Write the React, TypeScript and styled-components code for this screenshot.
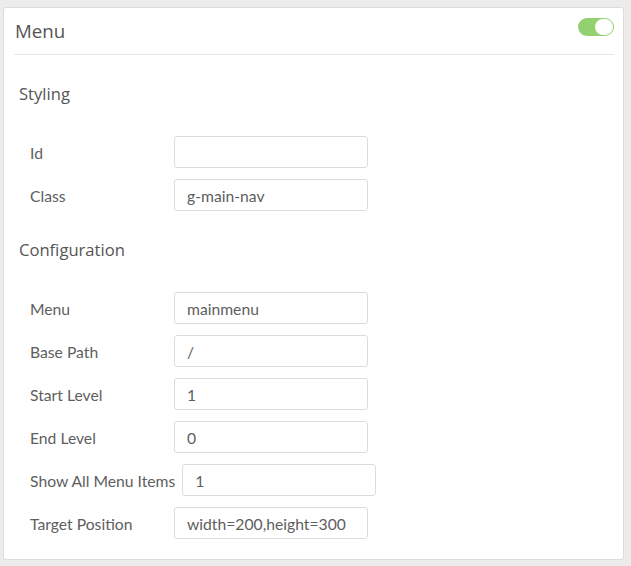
import React from "react";
import styled, { createGlobalStyle } from "styled-components";

const Global = createGlobalStyle`
  html, body { margin: 0; padding: 0; background: #ececec; }
  body { font-family: Lato, "Open Sans", sans-serif; }
  * { box-sizing: border-box; }
`;

const Page = styled.div`
  padding: 7px 8px 6px 3px;
`;

const Card = styled.div`
  width: 621px;
  height: 553px;
  background: #fff;
  border: 1px solid #dcdcdc;
  border-radius: 3px;
  display: flex;
  flex-direction: column;
`;

const Header = styled.div`
  display: flex;
  justify-content: space-between;
  align-items: flex-start;
  margin: 0 9px 0 10px;
  padding: 11px 0 0 1px;
  height: 47px;
  border-bottom: 1px solid #e6e6e6;
`;

const Title = styled.h2`
  margin: 0;
  font-family: "Open Sans", sans-serif;
  font-weight: 400;
  font-size: 18.7px;
  line-height: 24px;
  color: #555;
`;

const Toggle = styled.div<{ $on: boolean }>`
  width: 36px;
  height: 18px;
  border-radius: 9px;
  background: ${(p) => (p.$on ? "#93d06f" : "#ccc")};
  display: flex;
  justify-content: ${(p) => (p.$on ? "flex-end" : "flex-start")};
  align-items: center;
  padding: 1px;
  margin-top: -1px;
`;

const Knob = styled.div`
  width: 18px;
  height: 16px;
  border-radius: 8px;
  background: #fff;
`;

const Body = styled.div`
  padding: 28px 0 0 15px;
  display: flex;
  flex-direction: column;
  gap: 28px;
`;

const Section = styled.section`
  display: flex;
  flex-direction: column;
`;

const SectionTitle = styled.h3`
  margin: 0 0 31px 0;
  font-family: "Open Sans", sans-serif;
  font-weight: 400;
  font-size: 16.6px;
  line-height: 22px;
  color: #555;
`;

const Rows = styled.div`
  display: flex;
  flex-direction: column;
  gap: 11px;
  padding-left: 11px;
`;

const Row = styled.div`
  display: flex;
  align-items: center;
`;

const Label = styled.label`
  min-width: 144px;
  padding: 2px 7px 0 0;
  font-size: 15.7px;
  color: #5e5e5e;
  white-space: nowrap;
`;

const Input = styled.input`
  width: 194px;
  height: 32px;
  border: 1px solid #dcdcdc;
  border-radius: 3px;
  padding: 2px 0 0 12px;
  font-family: Lato, sans-serif;
  font-size: 15.7px;
  color: #5e5e5e;
  outline: none;
  background: #fff;
`;

const styling = [
  { label: "Id", value: "" },
  { label: "Class", value: "g-main-nav" },
];

const config = [
  { label: "Menu", value: "mainmenu" },
  { label: "Base Path", value: "/" },
  { label: "Start Level", value: "1" },
  { label: "End Level", value: "0" },
  { label: "Show All Menu Items", value: "1" },
  { label: "Target Position", value: "width=200,height=300" },
];

function Fields({ items }: { items: { label: string; value: string }[] }) {
  return (
    <Rows>
      {items.map((f) => (
        <Row key={f.label}>
          <Label>{f.label}</Label>
          <Input defaultValue={f.value} />
        </Row>
      ))}
    </Rows>
  );
}

export default function App() {
  return (
    <>
      <Global />
      <Page>
        <Card>
          <Header>
            <Title>Menu</Title>
            <Toggle $on>
              <Knob />
            </Toggle>
          </Header>
          <Body>
            <Section>
              <SectionTitle>Styling</SectionTitle>
              <Fields items={styling} />
            </Section>
            <Section>
              <SectionTitle>Configuration</SectionTitle>
              <Fields items={config} />
            </Section>
          </Body>
        </Card>
      </Page>
    </>
  );
}
